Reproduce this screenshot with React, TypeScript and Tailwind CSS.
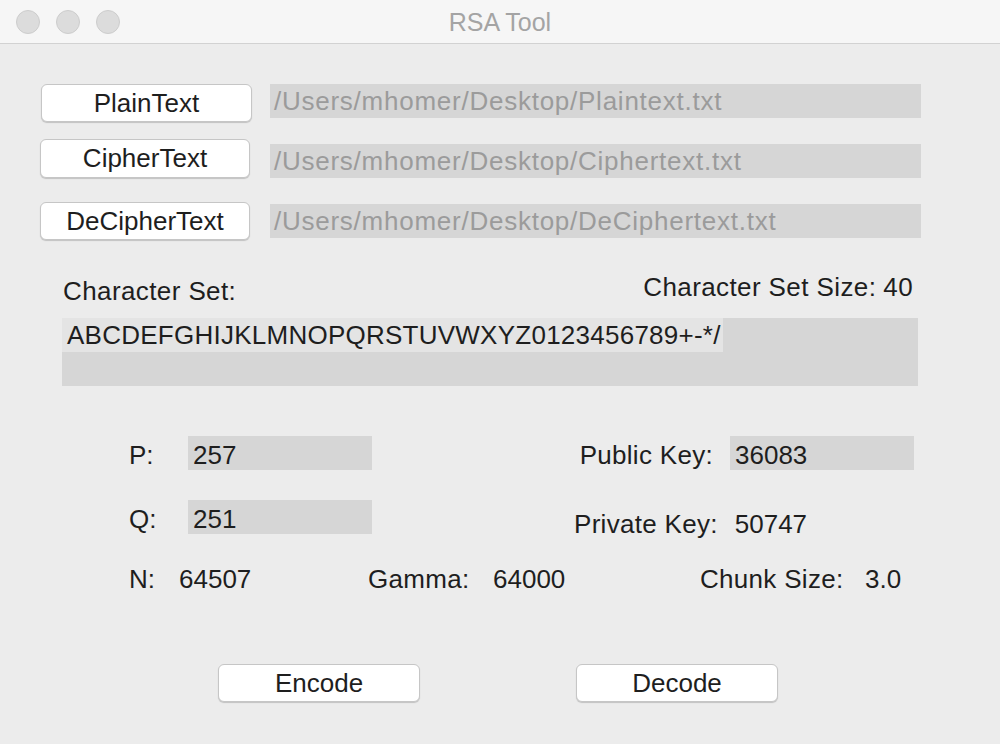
const font = { fontFamily: '"Liberation Sans", Arial, sans-serif' };

function MacButton({ label, className }: { label: string; className: string }) {
  return (
    <button
      type="button"
      className={`flex items-center justify-center rounded-[6px] border border-[#c6c6c6] bg-white text-[26px] text-[#1e1e1e] shadow-[0_1px_1px_rgba(0,0,0,0.18)] ${className}`}
    >
      {label}
    </button>
  );
}

function PathField({ value, className }: { value: string; className: string }) {
  return (
    <div
      className={`flex h-[34px] w-[651px] items-center bg-[#d6d6d6] pl-[4px] text-[26px] tracking-[0.75px] text-[#9b9b9b] ${className}`}
    >
      {value}
    </div>
  );
}

function NumField({ value }: { value: string }) {
  return (
    <div className="flex h-[34px] w-[184px] items-center bg-[#d6d6d6] pl-[5px] pt-[4px] text-[26px] leading-[30px] text-[#1e1e1e]">
      {value}
    </div>
  );
}

export default function App() {
  return (
    <div className="h-[744px] w-[1000px] overflow-hidden bg-[#ececec] text-[#1e1e1e]" style={font}>
      {/* Title bar */}
      <div className="relative flex h-[44px] items-center justify-center border-b border-[#d2d2d2] bg-[#f6f6f6]">
        <div className="absolute left-[16px] top-[10px] flex gap-[16px]">
          <span className="h-[24px] w-[24px] rounded-full border border-[#cdcdcd] bg-[#dcdcdc]" />
          <span className="h-[24px] w-[24px] rounded-full border border-[#cdcdcd] bg-[#dcdcdc]" />
          <span className="h-[24px] w-[24px] rounded-full border border-[#cdcdcd] bg-[#dcdcdc]" />
        </div>
        <span className="mt-[2px] text-[25px] text-[#a4a4a4]">RSA Tool</span>
      </div>

      {/* File rows */}
      <div className="mt-[40px] flex items-start">
        <MacButton label="PlainText" className="ml-[41px] h-[38px] w-[211px]" />
        <PathField value="/Users/mhomer/Desktop/Plaintext.txt" className="ml-[18px]" />
      </div>
      <div className="mt-[17px] flex items-start">
        <MacButton label="CipherText" className="ml-[40px] h-[39px] w-[210px]" />
        <PathField value="/Users/mhomer/Desktop/Ciphertext.txt" className="ml-[20px] mt-[5px]" />
      </div>
      <div className="mt-[24px] flex items-start">
        <MacButton label="DeCipherText" className="ml-[40px] h-[38px] w-[210px]" />
        <PathField value="/Users/mhomer/Desktop/DeCiphertext.txt" className="ml-[20px] mt-[2px]" />
      </div>

      {/* Character set */}
      <div className="ml-[62px] mr-[82px] mt-[32px] flex h-[30px] items-start justify-between text-[26px] leading-[30px]">
        <span className="mt-[4px] pl-[1px] tracking-[0.4px]">Character Set:</span>
        <span className="mr-[5px] flex gap-[7px] tracking-[0.4px]">
          <span>Character Set Size:</span>
          <span>40</span>
        </span>
      </div>
      <div className="ml-[62px] mt-[16px] h-[68px] w-[856px] bg-[#d6d6d6]">
        <span className="inline-flex h-[34px] items-center bg-[#e4e4e4] pl-[5px] pr-[2px] text-[26px] tracking-[0.25px]">
          ABCDEFGHIJKLMNOPQRSTUVWXYZ0123456789+-*/
        </span>
      </div>

      {/* Keys */}
      <div className="mt-[50px] flex h-[34px] items-center text-[26px] leading-[30px]">
        <span className="ml-[129px] mt-[4px] w-[59px]">P:</span>
        <NumField value="257" />
        <span className="ml-auto mr-[17px] mt-[4px] tracking-[0.3px]">Public Key:</span>
        <div className="mr-[86px]">
          <NumField value="36083" />
        </div>
      </div>
      <div className="mt-[30px] flex h-[39px] items-start text-[26px] leading-[30px]">
        <span className="ml-[129px] mt-[4px] w-[59px]">Q:</span>
        <NumField value="251" />
        <span className="ml-[202px] mt-[9px] tracking-[0.3px]">Private Key:</span>
        <span className="ml-[17px] mt-[9px]">50747</span>
      </div>
      <div className="mt-[25px] flex h-[30px] items-center text-[26px] leading-[30px]">
        <span className="ml-[129px] w-[50px]">N:</span>
        <span className="w-[189px]">64507</span>
        <span className="w-[125px] tracking-[0.3px]">Gamma:</span>
        <span className="w-[207px]">64000</span>
        <span className="w-[165px] tracking-[0.3px]">Chunk Size:</span>
        <span>3.0</span>
      </div>

      {/* Actions */}
      <div className="mt-[70px] flex">
        <MacButton label="Encode" className="ml-[218px] h-[38px] w-[202px]" />
        <MacButton label="Decode" className="ml-[156px] h-[38px] w-[202px]" />
      </div>
    </div>
  );
}
